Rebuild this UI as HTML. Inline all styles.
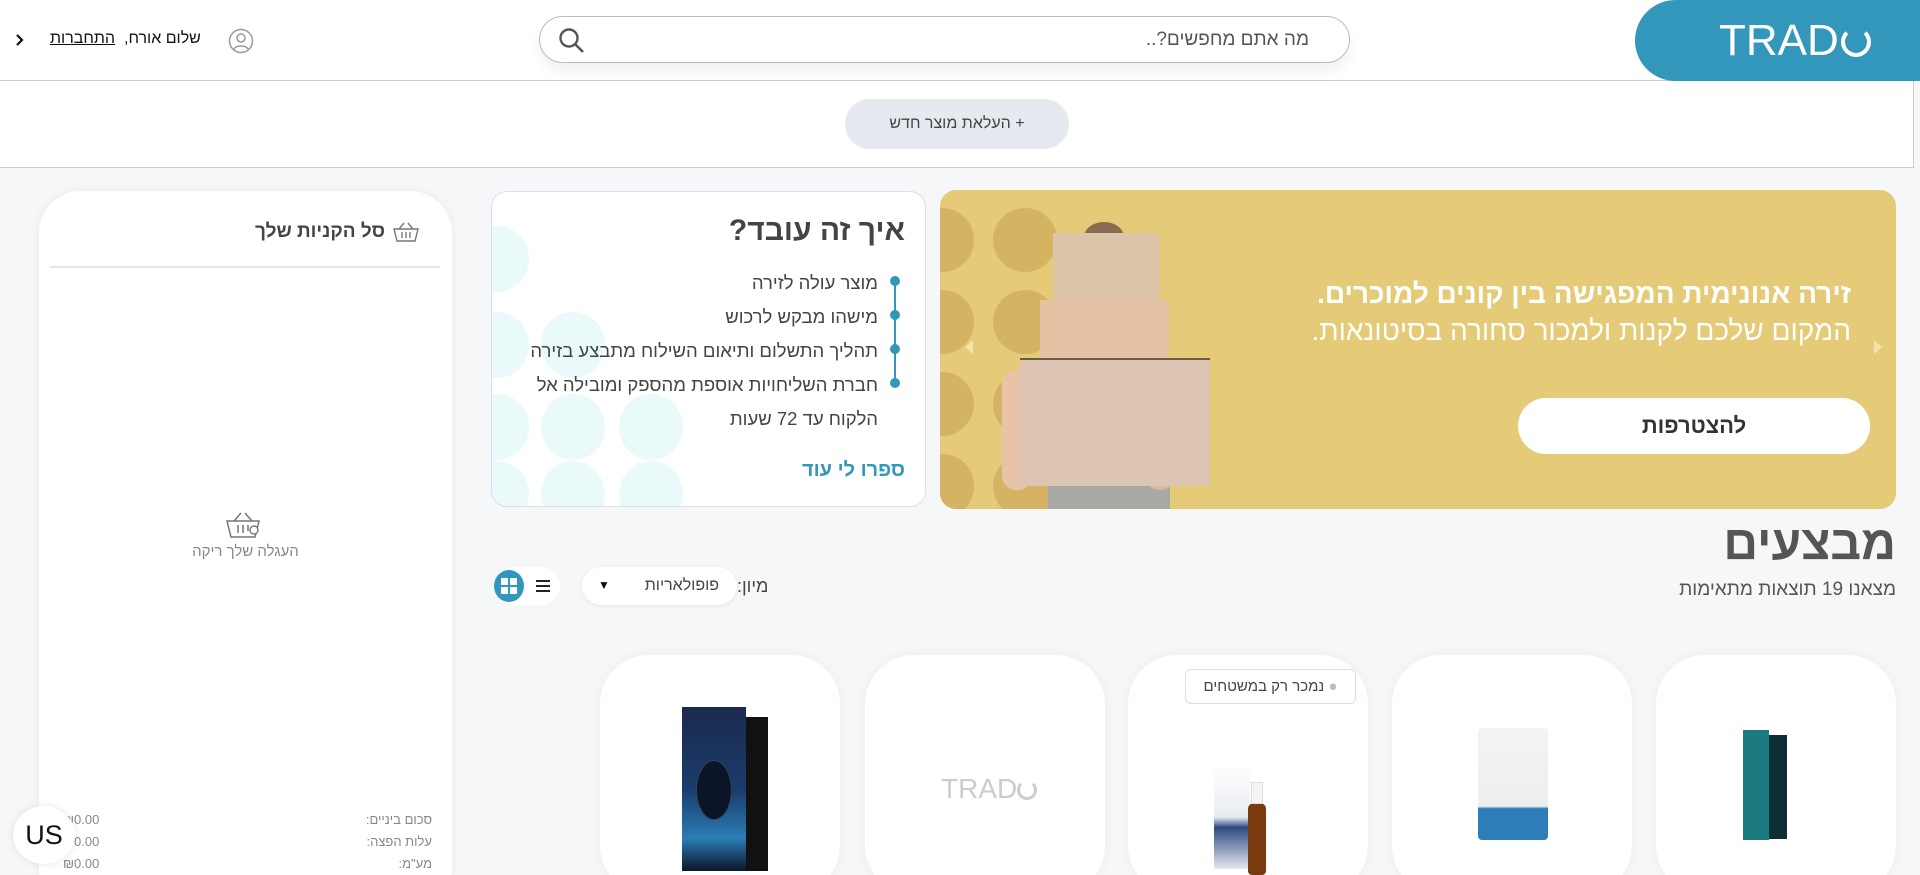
<!DOCTYPE html>
<html dir="rtl"><head><meta charset="utf-8">
<style>
*{box-sizing:border-box;margin:0;padding:0}
html,body{width:1920px;height:875px;overflow:hidden}
body{background:#f6f7f9;font-family:"Liberation Sans","DejaVu Sans",sans-serif;color:#444}
#wrap{position:relative;width:1920px;height:875px;overflow:hidden}
.abs{position:absolute}
.hdr{left:0;top:0;width:1920px;height:81px;background:#fff;border-bottom:1px solid #ccc}
.band{left:0;top:81px;width:1914px;height:87px;background:#fff;border-bottom:1px solid #ccc;border-right:1px solid #ccc}
.logo{left:1635px;top:0;width:285px;height:81px;background:#3397bb;border-radius:42px 0 0 42px;color:#fff;font-size:44px;line-height:81px;direction:ltr;padding-left:84px}
.search{left:539px;top:16px;width:811px;height:47px;border:1px solid #bbb;border-radius:24px;background:#fff;box-shadow:0 8px 14px rgba(0,0,0,.06)}
.card{background:#fff;border-radius:16px}
.dot{position:absolute;border-radius:50%}
.hd{position:absolute;border-radius:50%;width:64px;height:66px;background:#eaf9f9}
</style></head><body><div id="wrap">
<div class="abs hdr"></div>
<div class="abs logo">TRAD<span style="display:inline-block;width:30px;height:30px;border:4px solid #fff;border-radius:50%;border-top-color:transparent;vertical-align:-2px;margin-left:2px"></span></div>
<div class="abs search">
  <div class="abs" style="right:40px;top:12px;font-size:19px;color:#555">מה אתם מחפשים?..</div>
  <svg class="abs" style="left:18px;top:10px" width="28" height="28" viewBox="0 0 28 28"><circle cx="11" cy="11" r="8.5" fill="none" stroke="#555" stroke-width="2.4"/><path d="M17 17l8 8" stroke="#555" stroke-width="2.6"/></svg>
</div>
<svg class="abs" style="left:15px;top:33px" width="10" height="14" viewBox="0 0 10 14"><path d="M2 2l5 5-5 5" fill="none" stroke="#111" stroke-width="2.2"/></svg>
<div class="abs" style="left:50px;top:30px;font-size:16px;color:#111"><span style="text-decoration:underline">התחברות</span></div>
<div class="abs" style="left:124px;top:30px;font-size:16px;color:#111">שלום אורח,</div>
<svg class="abs" style="left:228px;top:28px" width="26" height="26" viewBox="0 0 26 26"><circle cx="13" cy="13" r="11.5" fill="none" stroke="#999" stroke-width="1.5"/><circle cx="13" cy="10" r="4" fill="none" stroke="#999" stroke-width="1.5"/><path d="M6 21c2-4 12-4 14 0" fill="none" stroke="#999" stroke-width="1.5"/></svg>

<div class="abs band"></div>
<div class="abs" style="left:845px;top:99px;width:224px;height:50px;background:#e6e9f0;border-radius:25px;text-align:center;line-height:50px;font-size:16px;color:#444">+ העלאת מוצר חדש</div>

<div class="abs card" style="left:940px;top:190px;width:956px;height:319px;background:#e5ca78;overflow:hidden">
  <div class="dot" style="left:-30px;top:18px;width:64px;height:64px;background:#d4b463"></div>
  <div class="dot" style="left:53px;top:18px;width:64px;height:64px;background:#d4b463"></div>
  <div class="dot" style="left:-30px;top:100px;width:64px;height:64px;background:#d4b463"></div>
  <div class="dot" style="left:53px;top:100px;width:64px;height:64px;background:#d4b463"></div>
  <div class="dot" style="left:-30px;top:182px;width:64px;height:64px;background:#d4b463"></div>
  <div class="dot" style="left:53px;top:182px;width:64px;height:64px;background:#d4b463"></div>
  <div class="dot" style="left:-30px;top:264px;width:64px;height:64px;background:#d4b463"></div>
  <div class="dot" style="left:53px;top:264px;width:64px;height:64px;background:#d4b463"></div>
  <div class="abs" style="left:108px;top:295px;width:122px;height:30px;background:#a8a8a4"></div>
  <div class="abs" style="left:62px;top:180px;width:30px;height:120px;background:#e9c3a8;border-radius:14px"></div>
  <div class="abs" style="left:205px;top:180px;width:30px;height:120px;background:#d9b8a0;border-radius:14px"></div>
  <div class="dot" style="left:144px;top:32px;width:40px;height:30px;background:#8a6a50"></div>
  <div class="abs" style="left:113px;top:43px;width:106px;height:70px;background:#dcc4ab"></div>
  <div class="abs" style="left:100px;top:110px;width:129px;height:58px;background:#e5c2a4"></div>
  <div class="abs" style="left:80px;top:168px;width:190px;height:128px;background:#dcc5b2;border-top:2px solid #6b5a4a"></div>
  <div class="abs" style="left:25px;top:150px;width:0;height:0;border:7px solid transparent;border-right:8px solid #f3e2b0;border-left:0"></div>
  <div class="abs" style="right:14px;top:150px;width:0;height:0;border:7px solid transparent;border-left:8px solid #f3e2b0;border-right:0"></div>
  <div class="abs" style="right:45px;top:88px;color:#fff;font-size:28px;font-weight:bold;white-space:nowrap">זירה אנונימית המפגישה בין קונים למוכרים.</div>
  <div class="abs" style="right:45px;top:125px;color:#fff;font-size:28px;white-space:nowrap">המקום שלכם לקנות ולמכור סחורה בסיטונאות.</div>
  <div class="abs" style="right:26px;top:208px;width:352px;height:56px;background:#fff;border-radius:28px;text-align:center;line-height:56px;font-size:22px;font-weight:bold;color:#333">להצטרפות</div>
</div>

<div class="abs card" style="left:491px;top:191px;width:435px;height:316px;border:1px solid #dde;overflow:hidden">
  <div class="hd" style="left:-27px;top:34px"></div>
  <div class="hd" style="left:-27px;top:120px"></div>
  <div class="hd" style="left:49px;top:120px"></div>
  <div class="hd" style="left:-27px;top:202px"></div>
  <div class="hd" style="left:49px;top:202px"></div>
  <div class="hd" style="left:127px;top:202px"></div>
  <div class="hd" style="left:-27px;top:269px"></div>
  <div class="hd" style="left:49px;top:269px"></div>
  <div class="hd" style="left:127px;top:269px"></div>
  <div class="abs" style="right:20px;top:22px;font-size:30px;font-weight:bold;color:#444">איך זה עובד?</div>
  <div class="abs" style="right:29px;top:90px;width:2px;height:102px;background:#3397bb"></div>
  <div class="dot" style="right:25px;top:84px;width:10px;height:10px;background:#3397bb"></div>
  <div class="dot" style="right:25px;top:118px;width:10px;height:10px;background:#3397bb"></div>
  <div class="dot" style="right:25px;top:152px;width:10px;height:10px;background:#3397bb"></div>
  <div class="dot" style="right:25px;top:186px;width:10px;height:10px;background:#3397bb"></div>
  <div class="abs" style="right:47px;top:74px;font-size:18.5px;line-height:34px;color:#444;white-space:nowrap">מוצר עולה לזירה<br>מישהו מבקש לרכוש<br>תהליך התשלום ותיאום השילוח מתבצע בזירה<br>חברת השליחויות אוספת מהספק ומובילה אל<br>הלקוח עד 72 שעות</div>
  <div class="abs" style="right:20px;top:267px;font-size:20px;font-weight:bold;color:#3397bb">ספרו לי עוד</div>
</div>

<div class="abs" style="right:24px;top:516px;font-size:48px;font-weight:bold;color:#555">מבצעים</div>
<div class="abs" style="right:24px;top:579px;font-size:19px;color:#555">מצאנו 19 תוצאות מתאימות</div>
<div class="abs" style="left:737px;top:576px;font-size:18px;color:#444">מיון:</div>
<div class="abs" style="left:582px;top:567px;width:155px;height:38px;background:#fff;border-radius:19px;box-shadow:0 1px 4px rgba(0,0,0,.08)">
  <div class="abs" style="right:18px;top:10px;font-size:16px;color:#444">פופולאריות</div>
  <div class="abs" style="left:16px;top:11px;font-size:12px;color:#111">▼</div>
</div>
<div class="abs" style="left:494px;top:567px;width:66px;height:38px;background:#fff;border-radius:19px"></div>
<div class="dot" style="left:494px;top:570px;width:30px;height:32px;background:#3397bb"></div>
<svg class="abs" style="left:500px;top:577px" width="18" height="18" viewBox="0 0 18 18"><rect x="1" y="1" width="7" height="7" fill="#fff"/><rect x="10" y="1" width="7" height="7" fill="#fff"/><rect x="1" y="10" width="7" height="7" fill="#fff"/><rect x="10" y="10" width="7" height="7" fill="#fff"/></svg>
<svg class="abs" style="left:535px;top:579px" width="16" height="14" viewBox="0 0 16 14"><path d="M1 2h14M1 7h14M1 12h14" stroke="#222" stroke-width="2"/></svg>

<div class="abs" style="left:600px;top:655px;width:240px;height:240px;background:#fff;border-radius:49px;box-shadow:0 0 12px rgba(0,0,0,.05)">
  <div class="abs" style="left:82px;top:52px;width:64px;height:164px;background:linear-gradient(#1b2a50,#1b3b6a 50%,#2a7db5 80%,#0b1528)"></div>
  <div class="abs" style="left:146px;top:62px;width:22px;height:154px;background:#111"></div>
  <div class="dot" style="left:96px;top:105px;width:36px;height:60px;background:#0c1428;border:1px solid #345"></div>
</div>
<div class="abs" style="left:865px;top:655px;width:240px;height:240px;background:#fff;border-radius:49px;box-shadow:0 0 12px rgba(0,0,0,.05)">
  <div class="abs" style="left:76px;top:118px;font-size:28px;color:#ccc;direction:ltr">TRAD<span style="display:inline-block;width:20px;height:20px;border:3px solid #ccc;border-radius:50%;border-top-color:transparent;vertical-align:-2px"></span></div>
</div>
<div class="abs" style="left:1128px;top:655px;width:240px;height:240px;background:#fff;border-radius:49px;box-shadow:0 0 12px rgba(0,0,0,.05)">
  <div class="abs" style="left:57px;top:14px;width:171px;height:35px;border:1px solid #dde;border-radius:6px;background:#fff;font-size:15px;color:#444;text-align:center;line-height:33px"><span style="color:#bbc">●</span> נמכר רק במשטחים</div>
  <div class="abs" style="left:86px;top:110px;width:36px;height:104px;background:linear-gradient(#fff,#e8ecf0 50%,#2b4a80 60%,#e6eaef)"></div>
  <div class="abs" style="left:120px;top:148px;width:18px;height:72px;background:#7a3a10;border-radius:6px 6px 4px 4px"></div>
  <div class="abs" style="left:123px;top:127px;width:12px;height:22px;background:#f4f4f4;border:1px solid #ddd"></div>
</div>
<div class="abs" style="left:1392px;top:655px;width:240px;height:240px;background:#fff;border-radius:49px;box-shadow:0 0 12px rgba(0,0,0,.05)">
  <div class="abs" style="left:86px;top:73px;width:70px;height:112px;background:linear-gradient(#f3f3f3,#eee 70%,#2d7db8 72%,#2d7db8);border-radius:4px"></div>
</div>
<div class="abs" style="left:1656px;top:655px;width:240px;height:240px;background:#fff;border-radius:49px;box-shadow:0 0 12px rgba(0,0,0,.05)">
  <div class="abs" style="left:87px;top:75px;width:26px;height:110px;background:#1d7a80"></div>
  <div class="abs" style="left:113px;top:80px;width:18px;height:104px;background:#0e2e35"></div>
</div>

<div class="abs" style="left:39px;top:191px;width:413px;height:720px;background:#fff;border-radius:42px;box-shadow:0 0 10px rgba(0,0,0,.06)">
  <div class="abs" style="right:67px;top:30px;font-size:19px;font-weight:bold;color:#444">סל הקניות שלך</div>
  <svg class="abs" style="right:32px;top:30px" width="28" height="22" viewBox="0 0 28 22"><path d="M2 8h24l-3 12H5zM7 8l5-6M21 8l-5-6M10 11v6M14 11v6M18 11v6" fill="none" stroke="#777" stroke-width="1.4"/></svg>
  <div class="abs" style="left:11px;right:12px;top:75px;height:2px;background:#e4e4ea"></div>
  <svg class="abs" style="left:185px;top:320px" width="38" height="32" viewBox="0 0 38 32"><path d="M3 10h32l-4 16H7zM10 10l7-8M28 10l-7-8M14 14v8M19 14v8M24 14v6" fill="none" stroke="#777" stroke-width="1.5"/><circle cx="30" cy="19" r="4" fill="#fff" stroke="#777" stroke-width="1.4"/></svg>
  <div class="abs" style="left:0;width:413px;top:352px;text-align:center;font-size:15px;color:#888">העגלה שלך ריקה</div>
  <div class="abs" style="right:20px;top:618px;font-size:13px;color:#888;line-height:22px">סכום ביניים:<br>עלות הפצה:<br>מע"מ:</div>
  <div class="abs" style="left:24px;top:618px;font-size:13px;color:#888;line-height:22px;direction:ltr">₪0.00<br>₪0.00<br>₪0.00</div>
</div>
<div class="dot" style="left:13px;top:806px;width:62px;height:58px;background:#fff;box-shadow:0 0 8px rgba(0,0,0,.1);text-align:center;line-height:58px;font-size:27px;color:#111">US</div>
</div></body></html>
